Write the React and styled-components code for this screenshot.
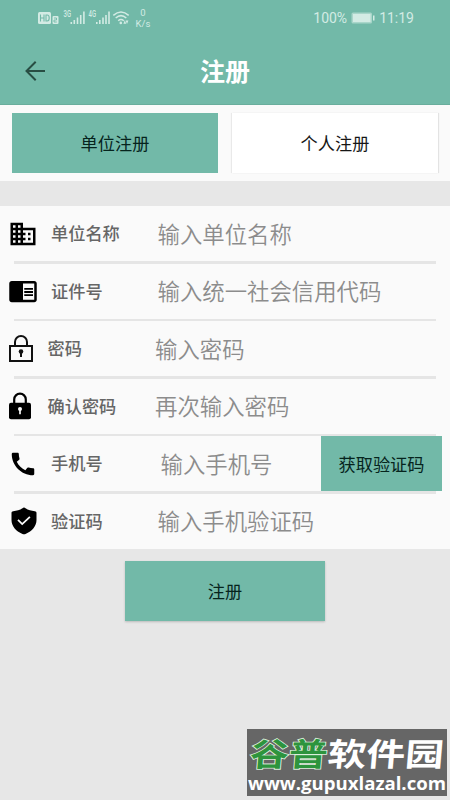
import React, { useState } from "react";
import styled, { createGlobalStyle } from "styled-components";
import { MdBusiness, MdCall, MdChromeReaderMode } from "react-icons/md";

const GlobalStyle = createGlobalStyle`
	* {
		box-sizing: border-box;
	}

	body {
		margin: 0;
		background: #e7e7e7;
		font-family: Roboto, "Noto Sans CJK SC", sans-serif;
	}
`;

const Screen = styled.div`
	position: relative;
	width: 450px;
	height: 800px;
	overflow: hidden;
	background: #e7e7e7;
`;

const Header = styled.header`
	height: 105px;
	background: #72b9a8;
	border-bottom: 1px solid #69ad9c;
`;

const StatusBar = styled.div`
	display: flex;
	align-items: center;
	justify-content: space-between;
	height: 36px;
	padding: 0 36px 0 38px;
	color: #d3ebe4;
`;

const StatusGroup = styled.div`
	display: flex;
	align-items: center;
	font-size: 14px;
	line-height: 16px;

	svg {
		display: block;
	}
`;

const Speed = styled.div`
	width: 16px;
	margin-left: 5px;
	font-size: 9.5px;
	line-height: 11.5px;
	text-align: center;
	white-space: nowrap;
`;

const Battery = styled.svg`
	margin: 0 4px 0 4px;
`;

const TitleBar = styled.div`
	display: grid;
	grid-template-columns: 70px 1fr 70px;
	align-items: center;
	height: 69px;

	button {
		display: flex;
		padding: 0 0 0 24px;
		border: 0;
		background: none;
	}

	h1 {
		margin: 0;
		padding-top: 4px;
		color: #fff;
		font-size: 25px;
		font-weight: 700;
		line-height: 34px;
		text-align: center;
	}
`;

const Tabs = styled.div`
	display: flex;
	gap: 14px;
	height: 76px;
	padding: 8px 12px;
	background: #fafafa;
`;

const Tab = styled.button`
	flex: 1;
	padding: 0 0 1px;
	border: 0;
	background: ${({ $active }) => $active ? '#72b9a8' : '#fff'};
	box-shadow: ${({ $active }) => $active ? 'none' : '-1px 0 1px #e9e9e9, 1px 0 1px #e3e3e3'};
	color: ${({ $active }) => $active ? '#06241d' : '#161616'};
	font-family: inherit;
	font-size: 17.2px;
`;

const Form = styled.form`
	margin: 0;
	padding-top: 25px;
`;

const Fields = styled.div`
	height: 343px;
	background: #fafafa;
`;

const Row = styled.div`
	display: flex;
	align-items: center;
	height: 55px;
`;

const Divider = styled.div`
	height: 2.6px;
	margin: 0 14px;
	background: #e5e5e5;
`;

const IconBox = styled.div`
	display: flex;
	flex: none;
	justify-content: center;
	width: 45px;
	padding-right: ${({ $shift = 0 }) => Math.max($shift, 0)}px;
	padding-left: ${({ $shift = 0 }) => Math.max(-$shift, 0)}px;
	color: #000;

	svg {
		display: block;
	}
`;

const Label = styled.label`
	flex: none;
	width: ${({ $inset, $hint }) => $hint - $inset}px;
	margin-left: ${({ $inset }) => $inset - 45}px;
	padding-top: 1px;
	color: #666;
	font-size: 17.2px;
	font-weight: 500;
	line-height: 24px;
`;

const Field = styled.input`
	flex: 1;
	min-width: 0;
	height: 40px;
	padding: 2px 0 0;
	border: 0;
	outline: 0;
	background: none;
	color: #333;
	font-family: inherit;
	font-size: 22.4px;
	font-weight: 350;

	&::placeholder {
		color: #8c8c8c;
		opacity: 1;
	}
`;

const CodeButton = styled.button`
	flex: none;
	width: 121px;
	height: 55px;
	margin-right: 8px;
	padding: 0;
	border: 0;
	background: #72b9a8;
	color: #06241d;
	font-family: inherit;
	font-size: 17.2px;
`;

const SubmitButton = styled.button`
	display: block;
	width: 200px;
	height: 60px;
	margin: 12px auto 0;
	padding: 0 0 2px;
	border: 0;
	background: #72b9a8;
	box-shadow: 0 1px 2px #bbb;
	color: #06241d;
	font-family: inherit;
	font-size: 17.2px;
`;

const Badge = styled.div`
	position: absolute;
	top: 729px;
	left: 247px;
	display: flex;
	flex-direction: column;
	align-items: center;
	width: 200px;
	height: 67px;
	padding-top: 9px;
	background: #666;
	color: #fff;
	white-space: nowrap;
	overflow: hidden;
`;

const BadgeName = styled.div`
	font-size: 32px;
	font-weight: 700;
	line-height: 34px;
	transform: scaleX(1.21) skewX(-4deg);

	span {
		color: #2d943d;
		-webkit-text-stroke: 1.6px #dcefdc;
		paint-order: stroke fill;
	}
`;

const BadgeUrl = styled.div`
	font-family: "Open Sans", sans-serif;
	font-size: 18.6px;
	font-weight: 700;
	line-height: 21px;
`;

const SignalIcons = () => (
	<svg width="92" height="18" viewBox="0 0 92 18" fill="currentColor">
		<rect x="0" y="3" width="13" height="12" rx="1.5" />
		<path d="M2.5 5.5v7M6 5.5v7M2.5 9H6M8 6v6h1.2q2 0 2-3t-2-3z" fill="none" stroke="#72b9a8" strokeWidth="1.1" />
		<rect x="14.5" y="7" width="6" height="8" rx="1" />
		<path d="M16 9h2.5v2H16v2h2.8" fill="none" stroke="#72b9a8" strokeWidth=".9" />
		<text x="25.5" y="8" fontSize="8.5" fontWeight="500" textLength="7.5" lengthAdjust="spacingAndGlyphs">3G</text>
		<path d="M32.5 13h1.6v2h-1.6zM35.5 11h1.6v4h-1.6zM38.7 8.5h1.6V15h-1.6zM41.9 6h1.6v9h-1.6zM45.1 2.5h1.6V15h-1.6z" />
		<text x="50.5" y="8" fontSize="8.5" fontWeight="500" textLength="7.5" lengthAdjust="spacingAndGlyphs">4G</text>
		<path d="M58 13h1.6v2H58zM61 11h1.6v4H61zM64.2 8.5h1.6V15h-1.6zM67.2 6h1.6v9h-1.6zM70.2 2.5h1.6V15h-1.6z" />
		<g fill="none" stroke="currentColor" strokeWidth="1.5">
			<path d="M75.3 6.4q7.7-6.7 15.4 0M77.7 9q5.3-4.8 10.6 0M80.2 11.7q2.8-2.5 5.6 0" />
		</g>
		<circle cx="82.8" cy="13.9" r="1.3" />
		<path d="M86.8 11.3 88.2 14.8H85.4zM89 15l-1.4-3.4h2.8z" />
	</svg>
);

const BackArrow = () => (
	<svg width="22" height="22" viewBox="0 0 22 22" fill="none" stroke="#284d43" strokeWidth="2">
		<path d="M21 11H3M11.7 1.8 2.5 11l9.2 9.2" />
	</svg>
);

const OpenLock = () => (
	<svg width="24" height="28" viewBox="0 0 24 28" fill="none" stroke="#111" strokeWidth="2">
		<path d="M6 11V7a6 6 0 0 1 12 0v4M1 11h22v15H1z" />
		<circle cx="12" cy="16.5" r="2.3" fill="#111" stroke="none" />
		<path d="M12 17v5" />
	</svg>
);

const FilledLock = () => (
	<svg width="22" height="28" viewBox="0 0 22 28">
		<path d="M5.2 12V7.5a5.8 5.8 0 0 1 11.6 0V12" fill="none" stroke="#000" strokeWidth="2.2" />
		<rect y="10.8" width="22" height="16.4" rx="2" />
		<circle cx="11" cy="17" r="2" fill="#fafafa" />
		<path d="M11 17v5.3" stroke="#fafafa" strokeWidth="1.7" />
	</svg>
);

const Shield = () => (
	<svg width="26" height="28" viewBox="0 0 26 28">
		<path d="M13 .5c.6 0 1 .4 1.5.7 2.7 1.7 5.8 2.6 9.3 3 1.1.1 1.7.6 1.7 1.8v7c0 6-4.3 11.3-11 14-.9.4-2.1.4-3 0C4.8 24.3.5 19 .5 13V6c0-1.2.6-1.7 1.7-1.8 3.5-.4 6.6-1.3 9.3-3C12 .9 12.4.5 13 .5z" />
		<path d="m7 12.9 4.2 4.2 7.7-7.3" fill="none" stroke="#fafafa" strokeWidth="1.8" />
	</svg>
);

const fields = [
	{ id: 'company', label: '单位名称', hint: '输入单位名称', icon: <MdBusiness size={30} />, inset: 51, hintLeft: 157.5 },
	{ id: 'license', label: '证件号', hint: '输入统一社会信用代码', icon: <MdChromeReaderMode size={30} />, inset: 51, hintLeft: 157.5 },
	{ id: 'password', label: '密码', hint: '输入密码', icon: <OpenLock />, inset: 47.5, hintLeft: 155, shift: 3 },
	{ id: 'confirm', label: '确认密码', hint: '再次输入密码', icon: <FilledLock />, inset: 47.5, hintLeft: 155, shift: 5 },
	{ id: 'phone', label: '手机号', hint: '输入手机号', icon: <MdCall size={30} />, inset: 51, hintLeft: 160.5, code: true },
	{ id: 'code', label: '验证码', hint: '输入手机验证码', icon: <Shield />, inset: 51, hintLeft: 157.5, shift: -2 },
];

const App = () => {
	const [tab, setTab] = useState('company');
	const [values, setValues] = useState({});

	const handleChange = (event) => {
		setValues({ ...values, [event.target.id]: event.target.value });
	}

	return(
		<Screen>
			<GlobalStyle />
			<Header>
				<StatusBar>
					<StatusGroup>
						<SignalIcons />
						<Speed>0<br />K/s</Speed>
					</StatusGroup>
					<StatusGroup>
						<span>100%</span>
						<Battery width="24" height="12" viewBox="0 0 24 12">
							<rect x=".5" y=".5" width="20.5" height="11" rx="1.5" fill="#a9d6ca" />
							<rect x="2" y="2" width="17.5" height="8" fill="#d3ebe4" />
							<rect x="22" y="3.5" width="1.5" height="5" fill="#d3ebe4" />
						</Battery>
						<span>11:19</span>
					</StatusGroup>
				</StatusBar>
				<TitleBar>
					<button type='button' aria-label='返回'><BackArrow /></button>
					<h1>注册</h1>
				</TitleBar>
			</Header>
			<Tabs>
				<Tab type='button' $active={tab === 'company'} onClick={() => setTab('company')}>单位注册</Tab>
				<Tab type='button' $active={tab === 'person'} onClick={() => setTab('person')}>个人注册</Tab>
			</Tabs>
			<Form onSubmit={(event) => event.preventDefault()}>
				<Fields>
					{fields.map((field, index) => (
						<React.Fragment key={field.id}>
							{index > 0 && <Divider />}
							<Row>
								<IconBox $shift={field.shift}>{field.icon}</IconBox>
								<Label htmlFor={field.id} $inset={field.inset} $hint={field.hintLeft}>{field.label}</Label>
								<Field
									id={field.id}
									type='text'
									value={values[field.id] || ''}
									onChange={handleChange}
									placeholder={field.hint} />
								{field.code && <CodeButton type='button'>获取验证码</CodeButton>}
							</Row>
						</React.Fragment>
					))}
				</Fields>
				<SubmitButton type='submit'>注册</SubmitButton>
			</Form>
			<Badge>
				<BadgeName><span>谷普</span>软件园</BadgeName>
				<BadgeUrl>www.gupuxlazal.com</BadgeUrl>
			</Badge>
		</Screen>
	);
}

export default App;
